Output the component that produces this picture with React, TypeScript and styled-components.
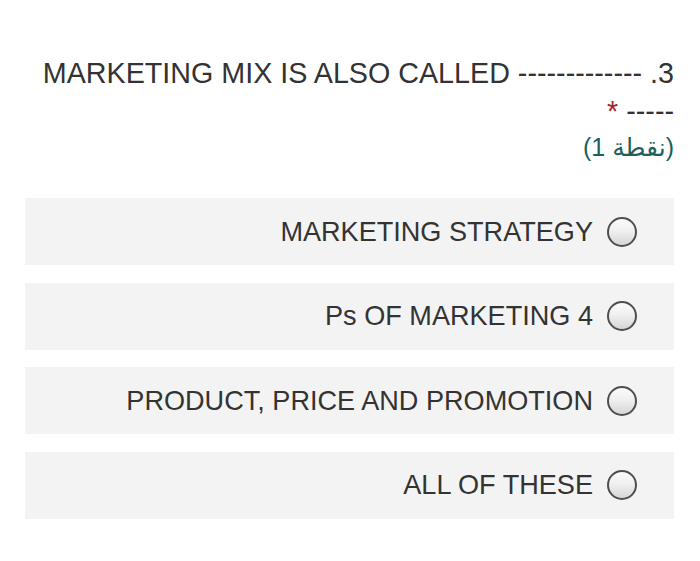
import React from "react";
import styled, { createGlobalStyle } from "styled-components";

const GlobalStyle = createGlobalStyle`
  html, body {
    margin: 0;
    padding: 0;
    background: #ffffff;
  }
  body {
    font-family: "Liberation Sans", Arial, "DejaVu Sans", sans-serif;
    color: #333333;
  }
`;

const Page = styled.div`
  width: 649px;
  margin: 0 0 0 25px;
  padding-top: 54px;
  direction: rtl;
`;

const Title = styled.div`
  font-size: 28.7px;
  line-height: 38px;
  color: #333333;
  text-align: right;
`;

const Number = styled.span`
  unicode-bidi: isolate;
`;

const Question = styled.span`
  direction: ltr;
  unicode-bidi: isolate;
`;

const Dashes = styled.span`
  white-space: nowrap;
`;

const Required = styled.span`
  color: #a4262c;
`;

const Points = styled.div`
  font-size: 25px;
  line-height: 34px;
  color: #1f5f5b;
  text-align: right;
  font-family: "Liberation Sans", "DejaVu Sans", sans-serif;
`;

const Choices = styled.div`
  margin-top: 34px;
  display: flex;
  flex-direction: column;
  gap: 17.5px;
`;

const Choice = styled.label`
  height: 67px;
  background: #f3f3f3;
  display: flex;
  align-items: center;
  gap: 14px;
  padding-right: 37px;
  box-sizing: border-box;
`;

const Radio = styled.span`
  width: 30px;
  height: 30px;
  box-sizing: border-box;
  border-radius: 50%;
  border: 2px solid #4e4e4e;
  background: linear-gradient(to bottom, #fbfbfb 0%, #f0f0f0 45%, #d6d6d6 100%);
  flex-shrink: 0;
`;

const ChoiceText = styled.span`
  font-size: 27.1px;
  color: #333333;
  direction: ltr;
  unicode-bidi: isolate;
`;

const options = [
  "MARKETING STRATEGY",
  "Ps OF MARKETING 4",
  "PRODUCT, PRICE AND PROMOTION",
  "ALL OF THESE",
];

export default function App() {
  return (
    <>
      <GlobalStyle />
      <Page>
        <Title>
          <Number>3.</Number>{" "}
          <Question>
            MARKETING MIX IS ALSO CALLED <Dashes>-------------</Dashes>{" "}
            <Dashes>-----</Dashes>
          </Question>{" "}
          <Required>*</Required>
        </Title>
        <Points>(نقطة 1)</Points>
        <Choices>
          {options.map((o) => (
            <Choice key={o}>
              <Radio />
              <ChoiceText>{o}</ChoiceText>
            </Choice>
          ))}
        </Choices>
      </Page>
    </>
  );
}
